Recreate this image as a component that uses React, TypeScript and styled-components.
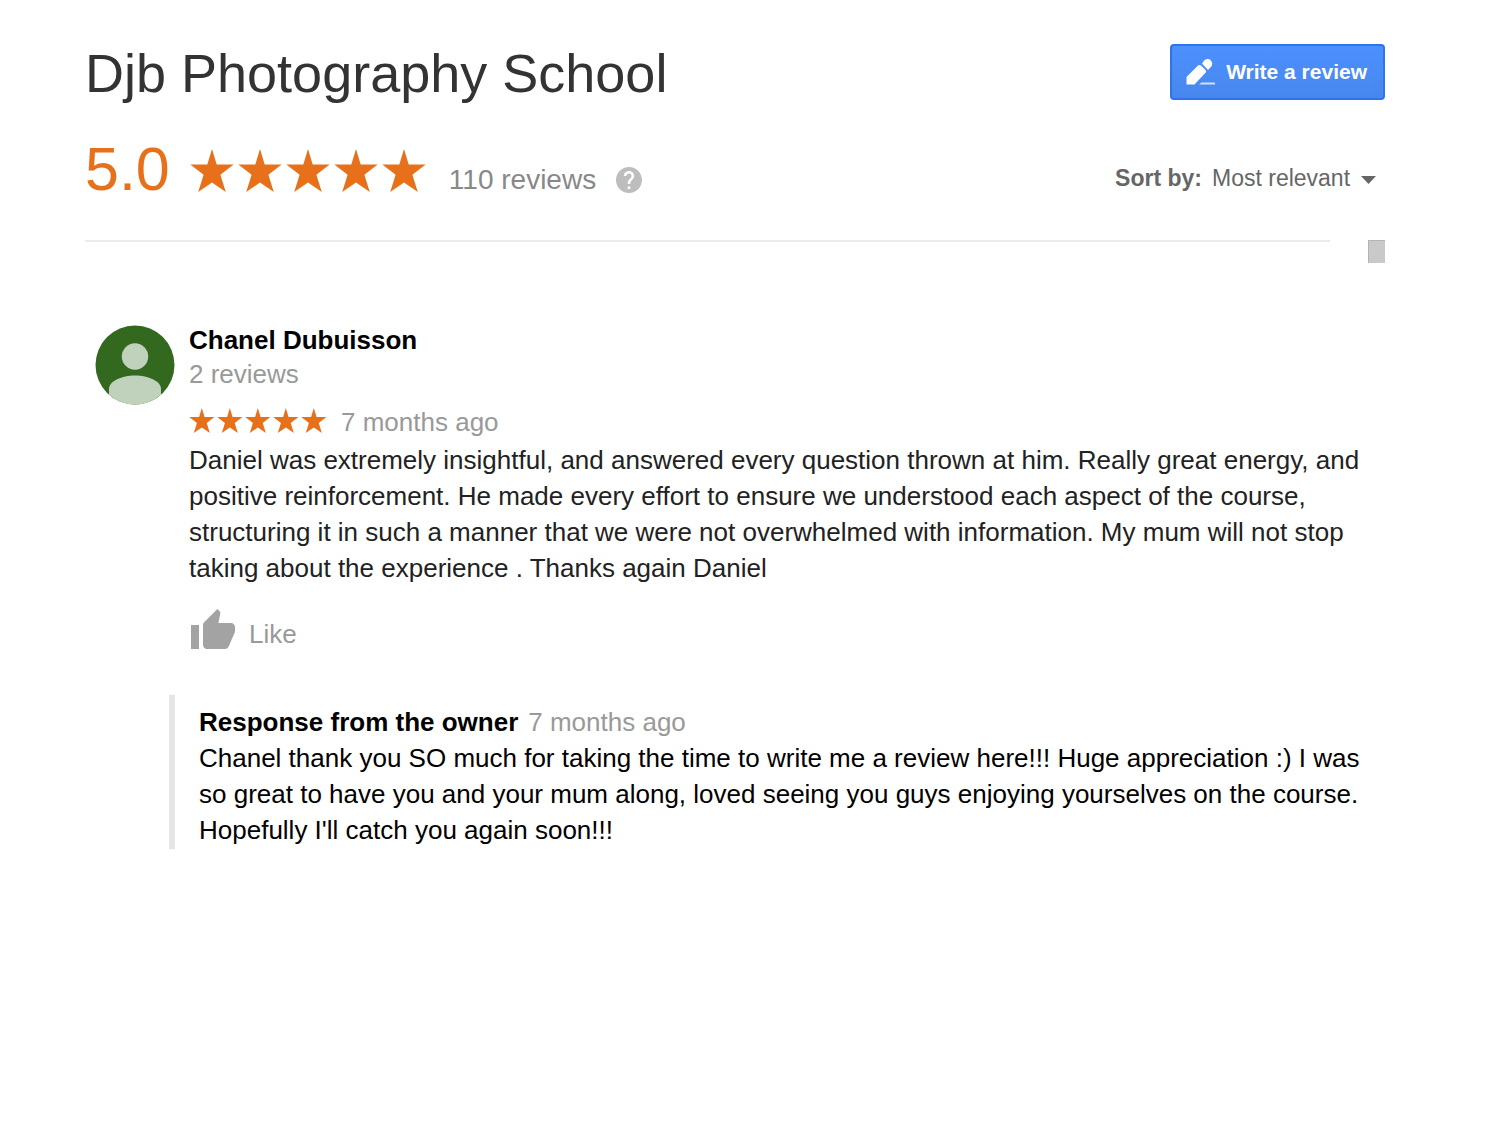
import React from "react";
import styled, { createGlobalStyle } from "styled-components";

const GlobalStyle = createGlobalStyle`
  *, *::before, *::after { box-sizing: border-box; }
  body {
    margin: 0;
    background: #fff;
    color: #222;
    font-family: "Liberation Sans", Arial, sans-serif;
    font-size: 26px;
    line-height: 36px;
  }
  button, select { font-family: inherit; }
`;

const Page = styled.main`
  padding: 44px 115px 44px 85px;
`;

const Header = styled.header`
  display: flex;
  justify-content: space-between;
  align-items: flex-start;
`;

const Title = styled.h1`
  margin: 0;
  color: #333;
  font-size: 54px;
  line-height: 58px;
  font-weight: 400;
`;

const WriteButton = styled.button`
  display: flex;
  align-items: center;
  gap: 10px;
  height: 56px;
  padding: 0 16px 0 14px;
  border: 2px solid #2f74ee;
  border-radius: 4px;
  background: linear-gradient(#4d90fe, #4787ed);
  color: #fff;
  font-size: 21px;
  line-height: 24px;
  font-weight: 700;
  white-space: nowrap;
  cursor: pointer;
`;

const Summary = styled.section`
  display: flex;
  align-items: flex-end;
  margin-top: 36px;
`;

const Score = styled.span`
  margin-right: 20px;
  color: #e7711b;
  font-size: 61px;
  line-height: 62px;
`;

const StarRow = styled.span`
  display: flex;
  flex: none;
`;

const SummaryStars = styled.div`
  padding-bottom: 3px;
`;

const Count = styled.div`
  display: flex;
  align-items: center;
  gap: 20px;
  margin-left: 19px;
  padding-bottom: 4px;
  color: #888;
  font-size: 28px;
  line-height: 32px;
`;

const HelpButton = styled.button`
  display: flex;
  padding: 0;
  border: 0;
  background: none;
  color: #bdbdbd;
  cursor: pointer;
`;

const Sort = styled.div`
  display: flex;
  gap: 10px;
  margin-left: auto;
  padding-bottom: 9px;
  color: #666;
  font-size: 23px;
  line-height: 26px;
`;

const SortLabel = styled.label`
  font-weight: 700;
`;

const SelectWrap = styled.span`
  position: relative;
  display: flex;
`;

const Select = styled.select`
  appearance: none;
  margin: 0;
  padding: 0 34px 0 0;
  border: 0;
  background: none;
  color: #666;
  font-size: 23px;
  line-height: 26px;
  cursor: pointer;
`;

const Caret = styled.svg`
  position: absolute;
  right: 9px;
  top: 11px;
  pointer-events: none;
`;

const Divider = styled.div`
  display: flex;
  justify-content: space-between;
  align-items: flex-start;
  gap: 38px;
  margin-top: 40px;
`;

const Rule = styled.hr`
  flex: 1;
  height: 2px;
  margin: 0;
  border: 0;
  background: #ebebeb;
`;

const ScrollThumb = styled.div`
  width: 17px;
  height: 23px;
  border: solid #b4b4b4;
  border-width: 1px 0 0 1px;
  background: #c9c9c9;
`;

const Review = styled.article`
  display: flex;
  gap: 14px;
  margin: 60px 0 0 10px;
`;

const Avatar = styled.svg`
  flex: none;
  margin-top: 2px;
`;

const ReviewBody = styled.div`
  flex: 1;
`;

const Author = styled.h2`
  margin: 0;
  color: #000;
  font-size: 26px;
  line-height: 34px;
  font-weight: 700;
`;

const Muted = styled.div`
  color: #999;
  line-height: 34px;
`;

const Meta = styled(Muted)`
  display: flex;
  align-items: center;
  gap: 12px;
  margin-top: 14px;
`;

const Text = styled.p`
  margin: 3px 0 0;
`;

const LikeButton = styled.button`
  display: flex;
  align-items: center;
  gap: 12px;
  margin-top: 21px;
  padding: 0;
  border: 0;
  background: none;
  color: #999;
  font-size: 26px;
  line-height: 36px;
  cursor: pointer;
`;

const LikeLabel = styled.span`
  padding-top: 6px;
`;

const Response = styled.section`
  margin: 40px 0 0 84px;
  padding: 9px 0 1px 24px;
  border-left: 6px solid #e5e5e5;
  color: #000;
`;

const ResponseHead = styled.div`
  display: flex;
  gap: 10px;
`;

const ResponseTitle = styled.h3`
  margin: 0;
  font-size: 26px;
  font-weight: 700;
`;

const ResponseTime = styled.span`
  color: #999;
`;

const ResponseText = styled.p`
  margin: 0;
`;

function Stars({ size }: { size: number }) {
  return (
    <StarRow role="img" aria-label="5 out of 5 stars">
      {[0, 1, 2, 3, 4].map((n) => (
        <svg key={n} width={size} height={size} viewBox="0 0 48 48">
          <path
            fill="#e7711b"
            d="M22 0l4.7 15.5h17L30.4 25.7 35.8 43 22 33.6 8.2 43l5.4-17.3L.3 15.5h17z"
          />
        </svg>
      ))}
    </StarRow>
  );
}

export default function App() {
  return (
    <>
      <GlobalStyle />
      <Page>
        <Header>
          <Title>Djb Photography School</Title>
          <WriteButton type="button">
            <svg width="30" height="30" viewBox="0 0 30 30" fill="#fff" aria-hidden="true">
              <path d="M.5 20L12 8.500c1-.8 2-.8 3 0l4.500 4.500c.8 1 .8 1.800 0 2.800L8.500 27.500H.5z" />
              <path d="M16 6.500l2.500-3.200c2-1.800 4.500-1.600 6.300.2s2 4.300.3 6.200L22 13z" />
              <path d="M15.500 25.500H29v2H13z" opacity=".75" />
            </svg>
            Write a review
          </WriteButton>
        </Header>

        <Summary>
          <Score>5.0</Score>
          <SummaryStars>
            <Stars size={48} />
          </SummaryStars>
          <Count>
            <span>110 reviews</span>
            <HelpButton type="button" aria-label="About these reviews">
              <svg width="26" height="26" viewBox="2 2 20 20" fill="currentColor">
                <path d="M12 2C6.480 2 2 6.480 2 12s4.480 10 10 10 10-4.480 10-10S17.520 2 12 2zm1 17h-2v-2h2v2zm2.070-7.750l-.9.920C13.450 12.900 13 13.500 13 15h-2v-.5c0-1.100.45-2.100 1.170-2.830l1.240-1.260c.37-.36.59-.86.59-1.410 0-1.100-.9-2-2-2s-2 .9-2 2H8c0-2.210 1.790-4 4-4s4 1.790 4 4c0 .88-.36 1.680-.93 2.250z" />
              </svg>
            </HelpButton>
          </Count>
          <Sort>
            <SortLabel htmlFor="sort">Sort by:</SortLabel>
            <SelectWrap>
              <Select id="sort" defaultValue="relevant">
                <option value="relevant">Most relevant</option>
              </Select>
              <Caret width="15" height="8" viewBox="0 0 15 8" fill="#666" aria-hidden="true">
                <path d="M0 0h15L7.500 8z" />
              </Caret>
            </SelectWrap>
          </Sort>
        </Summary>

        <Divider>
          <Rule />
          <ScrollThumb />
        </Divider>

        <Review>
          <Avatar width="80" height="80" viewBox="0 0 80 80" aria-hidden="true">
            <circle cx="40" cy="40" r="39.500" fill="#33691e" />
            <circle cx="40" cy="31.500" r="13.200" fill="#c0d2bc" />
            <path
              fill="#c0d2bc"
              d="M14 69.700V64c0-8 13-13.500 26-13.500S66 56 66 64v5.700A39.500 39.500 0 0 1 14 69.700z"
            />
          </Avatar>
          <ReviewBody>
            <Author>Chanel Dubuisson</Author>
            <Muted>2 reviews</Muted>
            <Meta>
              <Stars size={28} />
              <span>7 months ago</span>
            </Meta>
            <Text>
              Daniel was extremely insightful, and answered every question thrown at him. Really great
              energy, and positive reinforcement. He made every effort to ensure we understood each
              aspect of the course, structuring it in such a manner that we were not overwhelmed with
              information. My mum will not stop taking about the experience . Thanks again Daniel
            </Text>
            <LikeButton type="button">
              <svg width="48" height="48" viewBox="0 0 24 24" fill="#a3a3a3" aria-hidden="true">
                <path d="M1 21h4V9H1v12zm22-11c0-1.100-.9-2-2-2h-6.310l.95-4.570.03-.32c0-.41-.17-.79-.44-1.060L14.170 1 7.590 7.590C7.220 7.950 7 8.450 7 9v10c0 1.100.9 2 2 2h9c.83 0 1.540-.5 1.840-1.220l3.020-7.050c.09-.23.14-.47.14-.73v-2z" />
              </svg>
              <LikeLabel>Like</LikeLabel>
            </LikeButton>
          </ReviewBody>
        </Review>

        <Response>
          <ResponseHead>
            <ResponseTitle>Response from the owner</ResponseTitle>
            <ResponseTime>7 months ago</ResponseTime>
          </ResponseHead>
          <ResponseText>
            Chanel thank you SO much for taking the time to write me a review here!!! Huge
            appreciation :) I was so great to have you and your mum along, loved seeing you guys
            enjoying yourselves on the course. Hopefully I'll catch you again soon!!!
          </ResponseText>
        </Response>
      </Page>
    </>
  );
}
